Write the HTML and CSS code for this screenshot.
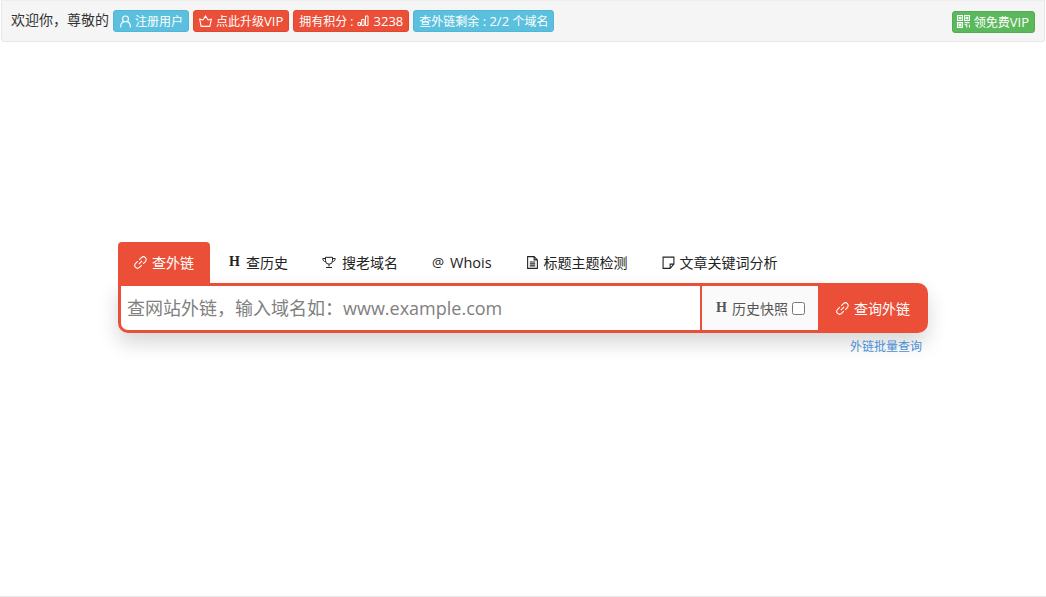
FILE: index.html
```
<!DOCTYPE html>
<html lang="zh-CN">
<head>
<meta charset="utf-8">
<title>查外链</title>
<link rel="stylesheet" href="styles.css">
</head>
<body>
<header class="topbar">
  <div class="topbar-left">
    <span class="welcome">欢迎你，尊敬的</span>
    <a class="badge badge-info"><svg class="ico ico-user" viewBox="0 0 12 12"><circle cx="6" cy="3.600" r="2.700"/><path d="M1.500 11.500c0-3.200 1.500-5 2.800-5.400M10.500 11.500c0-3.200-1.500-5-2.800-5.400"/></svg>注册用户</a>
    <a class="badge badge-red"><svg class="ico" viewBox="0 0 12 12"><path d="M.6 3.800 3.600 4.600 6 1 8.400 4.600 11.400 3.800 10 10.500H2z"/></svg>点此升级<span class="latin">VIP</span></a>
    <a class="badge badge-red">拥有积分 :<svg class="ico ico-bars" viewBox="0 0 12 12"><path d="M1 7.500h2.500v3H1zM4.700 4.500h2.500v6H4.700zM8.500 1h2.500v9.500H8.500z"/></svg><span class="latin">3238</span></a>
    <a class="badge badge-info">查外链剩余<span class="latin"> : 2/2 </span>个域名</a>
  </div>
  <a class="badge badge-green"><svg class="ico" viewBox="0 0 12 12"><path d="M.5.500h4.500v4.500H.5zM7 .5h4.500v4.500H7zM.5 7h4.500v4.500H.5zM7 7h4.500M7 9h2v2.500M11.500 9v2.500M2 2h1.500v1.500H2zM8.500 2H10v1.500H8.500zM2 8.500h1.500V10H2z"/></svg>领免费<span class="latin">VIP</span></a>
</header>
<main class="main">
  <section class="search">
    <nav class="tabs">
      <a class="tab tab-active"><svg class="ico tab-ico" viewBox="0 0 12 12"><path d="M4.500 7.500 7.500 4.500M4.800 3.600 6.900 1.500a2.500 2.500 0 0 1 3.600 3.600L8.400 7.200M7.200 8.400 5.100 10.500a2.500 2.500 0 0 1-3.600-3.600L3.600 4.800"/></svg>查外链</a>
      <a class="tab"><span class="h-mark">H</span>查历史</a>
      <a class="tab"><svg class="ico tab-ico tab-ico-wide" viewBox="0 0 14 12"><path d="M3.500 .8h7v3.400a3.500 3.500 0 0 1-7 0zM3.500 2H.8c0 2 1 3 2.900 3.200M10.500 2h2.700c0 2-1 3-2.900 3.200M7 7.700v2.300M4 11h6"/></svg>搜老域名</a>
      <a class="tab"><span class="at-mark">@</span><span class="whois">Whois</span></a>
      <a class="tab"><svg class="ico tab-ico" viewBox="0 0 12 12"><path d="M1.500 .6h6l3 3v7.800h-9zM7.500 .6v3h3M3.500 5.500h5M3.500 7.300h5M3.500 9.100h5"/></svg>标题主题检测</a>
      <a class="tab"><svg class="ico tab-ico" viewBox="0 0 12 12"><path d="M1 1h10v6.500L7.500 11.400H1zM11 7.500H7.500v3.900"/></svg>文章关键词分析</a>
    </nav>
    <form class="bar">
      <input class="domain" type="text" placeholder="查网站外链，输入域名如：www.example.com">
      <label class="history"><span class="h-mark h-mark-grey">H</span>历史快照<input class="check" type="checkbox"></label>
      <button class="submit" type="button"><svg class="ico tab-ico" viewBox="0 0 12 12"><path d="M4.500 7.500 7.500 4.500M4.800 3.600 6.900 1.500a2.500 2.500 0 0 1 3.600 3.600L8.400 7.200M7.200 8.400 5.100 10.500a2.500 2.500 0 0 1-3.600-3.600L3.600 4.800"/></svg>查询外链</button>
    </form>
    <div class="batch"><a class="batch-link">外链批量查询</a></div>
  </section>
</main>
</body>
</html>
```

FILE: styles.css
```
* { box-sizing: border-box; }
html, body { margin: 0; height: 597px; overflow: hidden; }
body {
  display: flex;
  flex-direction: column;
  background: #fff;
  color: #333;
  font-family: "Open Sans", "Noto Sans CJK SC", sans-serif;
  font-size: 13px;
  border-bottom: 1px solid #e7e7e7;
}
.topbar {
  margin: 0 1px;
  height: 42px;
  display: flex;
  align-items: center;
  justify-content: space-between;
  padding: 0 9px 0 9px;
  background: #f5f5f5;
  border: 1px solid #e7e7e7;
  border-top-color: #eee;
  border-radius: 0 0 3px 3px;
}
.topbar-left { display: flex; align-items: center; gap: 4px; }
.welcome { font-size: 14px; line-height: 20px; margin-top: -2px; }
.badge {
  display: inline-flex;
  align-items: center;
  height: 22px;
  padding: 0 5px;
  border-radius: 3px;
  color: #fff;
  font-size: 12px;
  white-space: pre;
}
.latin { font-size: 13px; }
.badge-info { background: #5bc0de; border: 1px solid #52b7d6; }
.badge-red { background: #ec4f38; border: 1px solid #dc4a35; }
.badge-green { background: #5cb85c; border: 1px solid #52ad52; margin-top: 1px; padding: 0 5px 0 4px; }
.ico {
  width: 13px;
  height: 13px;
  margin-right: 4px;
  fill: none;
  stroke: currentColor;
  stroke-width: 1;
  flex: none;
}
.ico-user { margin-right: 3px; }
.ico-bars { width: 12px; height: 12px; margin: 0 5px 0 3px; }
.main { flex: 1; padding: 200px 118px 0; }
.search { width: 810px; }
.tabs { display: flex; gap: 2px; height: 41px; }
.tab {
  display: flex;
  align-items: center;
  padding: 0 16px 1px;
  font-size: 14px;
  color: #222;
  white-space: pre;
}
.tab-active {
  margin-right: 1px;
  background: #ec4f38;
  color: #fff;
  border-radius: 4px 4px 0 0;
}
.tab-ico { width: 13px; height: 13px; margin-right: 5px; }
.tab-ico-wide { width: 14px; margin-right: 6px; }
.h-mark {
  font-family: "Liberation Serif", serif;
  font-weight: 700;
  font-size: 14px;
  margin-right: 6px;
}
.h-mark-grey { margin-right: 5px; color: #555; }
.at-mark { margin-right: 6px; font-size: 13.500px; }
.whois { font-size: 14.500px; }
.bar {
  display: flex;
  height: 50px;
  border-radius: 0 10px 10px 10px;
  box-shadow: 0 10px 20px rgba(0, 0, 0, .16);
}
.domain {
  flex: 1;
  min-width: 0;
  height: 100%;
  padding: 0 6px;
  border: 3px solid #ec4f38;
  border-right-width: 2px;
  border-radius: 0 0 0 10px;
  outline: 0;
  background: #fff;
  font-family: "Open Sans", "Noto Sans CJK SC", sans-serif;
  font-size: 18px;
  color: #333;
}
.domain::placeholder { color: #808080; opacity: 1; }
.history {
  width: 116px;
  display: flex;
  align-items: center;
  padding-left: 14px;
  background: #fafafa;
  border-top: 3px solid #ec4f38;
  border-bottom: 3px solid #ec4f38;
  font-size: 14px;
  color: #555;
  white-space: nowrap;
}
.check { width: 13px; height: 13px; margin: 0 0 0 4px; }
.submit {
  width: 110px;
  display: flex;
  align-items: center;
  justify-content: center;
  border: 0;
  padding: 0;
  background: #ec4f38;
  color: #fff;
  border-radius: 0 10px 10px 0;
  font-family: "Open Sans", "Noto Sans CJK SC", sans-serif;
  font-size: 14px;
}
.batch { display: flex; justify-content: flex-end; padding: 6px 6px 0 0; }
.batch-link { color: #4a90d2; font-size: 12px; line-height: 16px; }
```
